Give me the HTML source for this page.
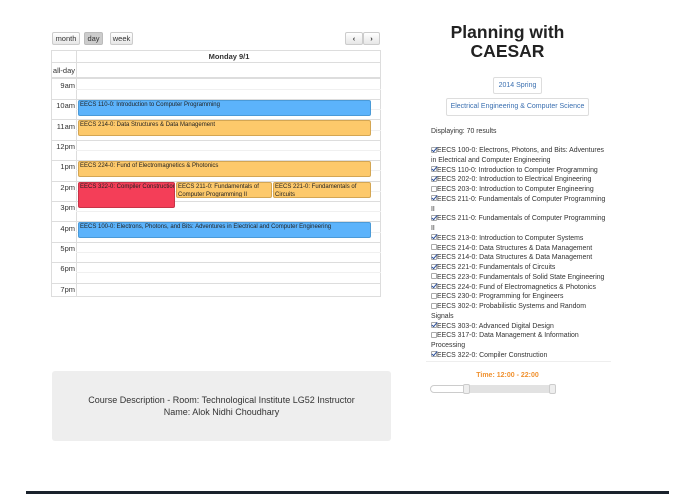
<!DOCTYPE html>
<html><head><meta charset="utf-8"><style>
*{margin:0;padding:0;box-sizing:border-box}
body{width:695px;height:494px;background:#fff;font-family:"Liberation Sans",sans-serif;position:relative;overflow:hidden;color:#333}
.a{position:absolute}
.btn{position:absolute;height:13px;border:1px solid #ccc;border-radius:2px;background:linear-gradient(#fff,#e6e6e6);font-size:7.5px;line-height:11px;text-align:center;color:#333}
.lbl{position:absolute;left:51px;width:24px;text-align:right;font-size:7.5px;color:#333}
.hl{position:absolute;left:51px;width:330px;height:1px;background:#ddd}
.hh{position:absolute;left:76px;width:305px;height:1px;background:#f0f0f0}
.ev{position:absolute;font-size:6px;line-height:8px;padding:0 1px;border:1px solid;border-radius:2px;color:#222;overflow:hidden;white-space:normal}
.bl{background:#5cb3fb;border-color:#4a9ad8}
.or{background:#fdc96b;border-color:#d4a653}
.rd{background:#f43e58;border-color:#c83347}
.li{font-size:6.9px;line-height:9.75px;color:#333}
.cb{display:inline-block;width:6px;height:6px;border:1px solid #aaa;border-radius:1px;vertical-align:-0.5px;background:#fff;position:relative}
.ck::after{content:"";position:absolute;left:1px;top:-2px;width:2px;height:5px;border:solid #2a4f9c;border-width:0 1.5px 1.5px 0;transform:rotate(40deg)}
</style></head><body>
<div class="btn" style="left:52px;top:32px;width:28px">month</div>
<div class="btn" style="left:84px;top:32px;width:19px;background:#ccc;border-color:#bbb">day</div>
<div class="btn" style="left:110px;top:32px;width:23px">week</div>
<div class="btn" style="left:345px;top:32px;width:18px;font-weight:bold">&#8249;</div>
<div class="btn" style="left:363px;top:32px;width:17px;font-weight:bold">&#8250;</div>

<div class="a" style="left:51px;top:50px;width:330px;height:247px;border:1px solid #ddd"></div>
<div class="a" style="left:76px;top:50px;width:1px;height:247px;background:#ddd"></div>
<div class="a" style="left:77px;top:51px;width:304px;text-align:center;font-size:7.5px;font-weight:bold;line-height:11px">Monday 9/1</div>
<div class="hl" style="top:62px"></div>
<div class="lbl" style="top:66px">all-day</div>
<div class="a" style="left:51px;top:77px;width:330px;height:2px;background:#ddd"></div>

<div class="lbl" style="top:81px">9am</div><div class="hh" style="top:89px"></div>
<div class="hl" style="top:99px"></div><div class="lbl" style="top:101px">10am</div><div class="hh" style="top:109px"></div>
<div class="hl" style="top:119px"></div><div class="lbl" style="top:122px">11am</div><div class="hh" style="top:130px"></div>
<div class="hl" style="top:140px"></div><div class="lbl" style="top:142px">12pm</div><div class="hh" style="top:150px"></div>
<div class="hl" style="top:160px"></div><div class="lbl" style="top:162px">1pm</div><div class="hh" style="top:170px"></div>
<div class="hl" style="top:181px"></div><div class="lbl" style="top:183px">2pm</div><div class="hh" style="top:191px"></div>
<div class="hl" style="top:201px"></div><div class="lbl" style="top:203px">3pm</div><div class="hh" style="top:211px"></div>
<div class="hl" style="top:221px"></div><div class="lbl" style="top:224px">4pm</div><div class="hh" style="top:232px"></div>
<div class="hl" style="top:242px"></div><div class="lbl" style="top:244px">5pm</div><div class="hh" style="top:252px"></div>
<div class="hl" style="top:262px"></div><div class="lbl" style="top:264px">6pm</div><div class="hh" style="top:272px"></div>
<div class="hl" style="top:283px"></div><div class="lbl" style="top:285px">7pm</div>

<div class="ev bl" style="left:78px;top:100px;width:293px;height:16px">EECS 110-0: Introduction to Computer Programming</div>
<div class="ev or" style="left:78px;top:120px;width:293px;height:16px">EECS 214-0: Data Structures &amp; Data Management</div>
<div class="ev or" style="left:78px;top:161px;width:293px;height:16px">EECS 224-0: Fund of Electromagnetics &amp; Photonics</div>
<div class="ev rd" style="left:78px;top:182px;width:97px;height:26px;white-space:nowrap">EECS 322-0: Compiler Construction</div>
<div class="ev or" style="left:176px;top:182px;width:96px;height:16px">EECS 211-0: Fundamentals of Computer Programming II</div>
<div class="ev or" style="left:273px;top:182px;width:98px;height:16px">EECS 221-0: Fundamentals of Circuits</div>
<div class="ev bl" style="left:78px;top:222px;width:293px;height:16px">EECS 100-0: Electrons, Photons, and Bits: Adventures in Electrical and Computer Engineering</div>

<div class="a" style="left:52px;top:371px;width:339px;height:70px;background:#eee;border-radius:3px;font-size:9px;line-height:12px;text-align:center;padding:23px 30px 0">Course Description - Room: Technological Institute LG52 Instructor Name: Alok Nidhi Choudhary</div>

<div class="a" style="left:420px;top:23px;width:175px;text-align:center;font-size:17.5px;line-height:19px;color:#222;font-weight:bold">Planning with<br>CAESAR</div>
<div class="a" style="left:493px;top:77px;width:49px;height:17px;border:1px solid #ddd;border-radius:2px;font-size:7px;line-height:15px;text-align:center;color:#3a6fb0">2014 Spring</div>
<div class="a" style="left:446px;top:98px;width:143px;height:18px;border:1px solid #ddd;border-radius:2px;font-size:7px;line-height:16px;text-align:center;color:#3a6fb0">Electrical Engineering &amp; Computer Science</div>
<div class="a li" style="left:431px;top:127px">Displaying: 70 results</div>

<div class="a li" style="left:431px;top:146px;width:178px">
<span class="cb ck"></span>EECS 100-0: Electrons, Photons, and Bits: Adventures in Electrical and Computer Engineering<br>
<span class="cb ck"></span>EECS 110-0: Introduction to Computer Programming<br>
<span class="cb ck"></span>EECS 202-0: Introduction to Electrical Engineering<br>
<span class="cb"></span>EECS 203-0: Introduction to Computer Engineering<br>
<span class="cb ck"></span>EECS 211-0: Fundamentals of Computer Programming II<br>
<span class="cb ck"></span>EECS 211-0: Fundamentals of Computer Programming II<br>
<span class="cb ck"></span>EECS 213-0: Introduction to Computer Systems<br>
<span class="cb"></span>EECS 214-0: Data Structures &amp; Data Management<br>
<span class="cb ck"></span>EECS 214-0: Data Structures &amp; Data Management<br>
<span class="cb ck"></span>EECS 221-0: Fundamentals of Circuits<br>
<span class="cb"></span>EECS 223-0: Fundamentals of Solid State Engineering<br>
<span class="cb ck"></span>EECS 224-0: Fund of Electromagnetics &amp; Photonics<br>
<span class="cb"></span>EECS 230-0: Programming for Engineers<br>
<span class="cb"></span>EECS 302-0: Probabilistic Systems and Random Signals<br>
<span class="cb ck"></span>EECS 303-0: Advanced Digital Design<br>
<span class="cb"></span>EECS 317-0: Data Management &amp; Information Processing<br>
<span class="cb ck"></span>EECS 322-0: Compiler Construction
</div>
<div class="a" style="left:426px;top:361px;width:185px;height:1px;background:#eee"></div>
<div class="a" style="left:420px;top:372px;width:175px;text-align:center;font-size:7px;font-weight:bold;color:#f0912f">Time: 12:00 - 22:00</div>
<div class="a" style="left:430px;top:385px;width:125px;height:8px;border:1px solid #ccc;border-radius:4px;background:#fff"></div>
<div class="a" style="left:466px;top:385px;width:86px;height:8px;background:#e2e2e2"></div>
<div class="a" style="left:463px;top:384px;width:7px;height:10px;border:1px solid #ccc;border-radius:2px;background:#eee"></div>
<div class="a" style="left:549px;top:384px;width:7px;height:10px;border:1px solid #ccc;border-radius:2px;background:#eee"></div>

<div class="a" style="left:26px;top:491px;width:643px;height:3px;background:#1a222c"></div>
</body></html>
